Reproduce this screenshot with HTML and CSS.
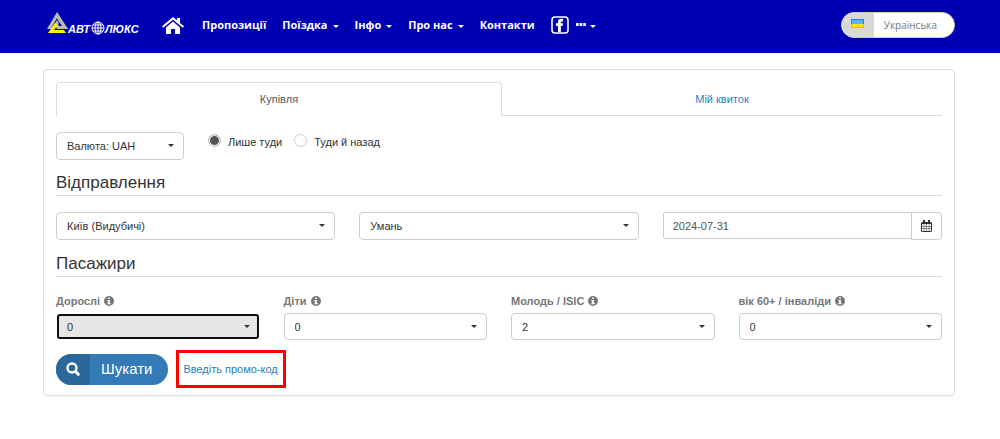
FILE: index.html
```html
<!DOCTYPE html>
<html lang="uk">
<head>
<meta charset="utf-8">
<meta name="viewport" content="width=device-width, initial-scale=1">
<title>Автолюкс</title>
<link rel="stylesheet" href="styles.css">
</head>
<body>
<svg class="sprite" aria-hidden="true">
  <symbol id="info" viewBox="0 0 16 16">
    <path fill="currentColor" fill-rule="evenodd" d="M8 0a8 8 0 1 0 0 16A8 8 0 0 0 8 0zM6.600 2.400h2.800v2.500H6.600zM5.300 6.200h4.100v5h1.300v2H5.300v-2h1.300v-3H5.300z"/>
  </symbol>
</svg>
<header class="topbar">
  <nav class="nav">
    <a class="logo" href="#" aria-label="Автолюкс">
      <svg width="94" height="26" viewBox="0 0 94 26">
        <path fill="#b9b9b9" d="M11 0L1 17h4L11 6l8 11h2z"/>
        <path fill="#b9b9b9" d="M11 0L22 17h-4L10 5z"/>
        <path fill="#b9b9b9" d="M11 8l-3 5 3 4h11l-2-3h-7l-1-2 1-1z"/>
        <path fill="#fff200" d="M9 11L2 21h18l-2-3H8l4-5z"/>
        <text class="logo-text" x="22" y="21">АВТ</text>
        <text class="logo-text" x="59" y="21">ЛЮКС</text>
        <g fill="none" stroke="#fff" stroke-width="1">
          <circle cx="52" cy="16" r="6"/><ellipse cx="52" cy="16" rx="3" ry="6"/>
          <path d="M46 16h12M52 10v12M47 13h10M47 19h10"/>
        </g>
      </svg>
    </a>
    <a class="home" href="#" aria-label="Головна">
      <svg width="22" height="18" viewBox="0 0 22 18">
        <path fill="#fff" d="M11 4.500L4 10.500V17h5v-5h4v5h5v-6.500z"/>
        <path fill="#fff" d="M11 0L0 9.300l1.300 1.500L11 2.800l9.700 8 1.300-1.500-4-3.400V1h-3v2.300z"/>
      </svg>
    </a>
    <a class="nav-link" href="#">Пропозиції</a>
    <a class="nav-link has-caret" href="#">Поїздка</a>
    <a class="nav-link has-caret" href="#">Інфо</a>
    <a class="nav-link has-caret" href="#">Про нас</a>
    <a class="nav-link" href="#">Контакти</a>
    <a class="facebook" href="#" aria-label="Facebook">
      <svg width="18" height="18" viewBox="0 0 18 18">
        <rect x="1" y="1" width="16" height="16" rx="3" fill="none" stroke="#fff" stroke-width="1.600"/>
        <path fill="#fff" d="M7 16V10H5V7.300h2V5.500C7 3.500 8.200 2.700 10 2.700h2V5.400h-1.200c-.7 0-.9.300-.9.900v1H12l-.4 2.700H9.900v6z"/>
      </svg>
    </a>
    <a class="nav-link has-caret more" href="#" aria-label="Ще">
      <svg width="10" height="3" viewBox="0 0 10 3"><path fill="#fff" d="M0 0h2.600v3H0zM3.600 0h2.600v3H3.600zM7.200 0h2.600v3H7.200z"/></svg>
    </a>
  </nav>
  <button class="language" type="button">
    <span class="language-flag">
      <svg width="13" height="9" viewBox="0 0 13 9"><path fill="#1787e0" d="M0 0h13v5H0z"/><path fill="#f3b60c" d="M0 5h13v4H0z"/><path fill="#55b5f5" d="M1 1h11v4H1z"/><path fill="#ffe11f" d="M1 5h11v3H1z"/></svg>
    </span>
    <span class="language-name">Українська</span>
  </button>
</header>

<main class="page">
  <form class="card">
    <div class="tabs">
      <a class="tab active" href="#">Купівля</a>
      <a class="tab" href="#">Мій квиток</a>
    </div>

    <div class="options">
      <div class="select currency"><select aria-label="Валюта"><option>Валюта: UAH</option></select></div>
      <div class="radios">
        <label><input type="radio" name="trip" checked>Лише туди</label>
        <label><input type="radio" name="trip">Туди й назад</label>
      </div>
    </div>

    <h2>Відправлення</h2>
    <div class="route">
      <div class="select"><select aria-label="Звідки"><option>Київ (Видубичі)</option></select></div>
      <div class="select"><select aria-label="Куди"><option>Умань</option></select></div>
      <div class="date">
        <input type="text" value="2024-07-31" aria-label="Дата">
        <button type="button" aria-label="Календар">
          <svg width="11" height="12" viewBox="0 0 11 12">
            <path fill="#333" fill-rule="evenodd" d="M1 2h1V0h2v2h3V0h2v2h1l1 1v8l-1 1H1l-1-1V3zM1 4V6h1.800V4zM3.300 4V6h2V4zM5.800 4V6h2V4zM8.300 4V6H10V4zM1 6.500v2h1.800v-2zM3.300 6.500v2h2v-2zM5.800 6.500v2h2v-2zM8.300 6.500v2H10v-2zM1 9v2h1.800V9zM3.300 9v2h2V9zM5.800 9v2h2V9zM8.300 9v2H10V9z"/>
          </svg>
        </button>
      </div>
    </div>

    <h2>Пасажири</h2>
    <div class="passengers">
      <div class="field">
        <label for="adults">Дорослі <svg class="info"><use href="#info"/></svg></label>
        <div class="select focused"><select id="adults"><option>0</option></select></div>
      </div>
      <div class="field">
        <label for="children">Діти <svg class="info"><use href="#info"/></svg></label>
        <div class="select"><select id="children"><option>0</option></select></div>
      </div>
      <div class="field">
        <label for="youth">Молодь / ISIC <svg class="info"><use href="#info"/></svg></label>
        <div class="select"><select id="youth"><option>2</option></select></div>
      </div>
      <div class="field">
        <label for="seniors">вік 60+ / інваліди <svg class="info"><use href="#info"/></svg></label>
        <div class="select"><select id="seniors"><option>0</option></select></div>
      </div>
    </div>

    <div class="actions">
      <button class="search" type="button">
        <span class="search-icon">
          <svg width="14" height="14" viewBox="0 0 14 14" fill="none" stroke="#fff"><circle cx="6" cy="6" r="4.500" stroke-width="2.400"/><path stroke-width="3" stroke-linecap="round" d="M9.500 9.500l2.800 2.800"/></svg>
        </span>
        <span class="search-label">Шукати</span>
      </button>
      <a class="promo" href="#">Введіть промо-код</a>
    </div>
  </form>
</main>
</body>
</html>
```
FILE: styles.css
```css
* { box-sizing: border-box; }

body {
  margin: 0;
  background: #fff;
  color: #333;
  font: 11px/16px "Liberation Sans", Arial, sans-serif;
}

a { color: #337ab7; text-decoration: none; }
button, input, select { font: inherit; color: inherit; }
svg { display: block; }
.sprite { position: absolute; width: 0; height: 0; }

/* Top bar */
.topbar {
  display: flex;
  align-items: center;
  justify-content: space-between;
  min-height: 53px;
  padding: 0 45px 4px 46px;
  background: #0000b3;
}
.nav { display: flex; align-items: center; gap: 16px; }
.logo { margin-right: 6px; }
.home { margin: 3px 2px 0 0; }
.logo-text {
  fill: #fff;
  font: italic bold 11px "Liberation Sans", Arial, sans-serif;
}
.nav-link {
  display: flex;
  align-items: center;
  color: #fff;
  font: bold 11px/16px "Open Sans", sans-serif;
}
.has-caret::after {
  content: "";
  margin: 3px 0 0 5px;
  border: 3px solid transparent;
  border-top-color: currentColor;
  border-bottom: 0;
}
.facebook { margin-right: -9px; }
.more::after { margin-left: 4px; }

.language {
  display: flex;
  height: 26px;
  padding: 0;
  overflow: hidden;
  border: 1px solid #ccc;
  border-radius: 13px;
  background: #fff;
  color: #777;
  font: 10px/16px "Open Sans", sans-serif;
}
.language-flag {
  display: flex;
  align-self: stretch;
  align-items: center;
  padding: 0 9px 2px;
  width: 32px;
  background: #d8d8d8;
}
.language-name { align-self: center; padding: 0 17px 0 10px; }

/* Card */
.page { padding: 16px 45px 43px 43px; }
.card {
  padding: 12px 12px 7px;
  border: 1px solid #ddd;
  border-radius: 4px;
  box-shadow: 0 1px 1px rgba(0, 0, 0, 0.05);
}

.tabs { display: flex; border-bottom: 1px solid #ddd; }
.tab {
  flex: 75;
  padding: 8px 0;
  border: 1px solid transparent;
  border-bottom: 0;
  text-align: center;
}
.tab.active {
  flex: 76;
  margin-bottom: -1px;
  border-color: #ddd;
  border-radius: 4px 4px 0 0;
  background: #fff;
  color: #555;
}

/* Controls */
.select { position: relative; }
.select select {
  display: block;
  width: 100%;
  height: 28px;
  padding: 0 24px 0 10px;
  border: 1px solid #ccc;
  border-radius: 4px;
  background: #fff;
  appearance: none;
}
.select::after {
  content: "";
  position: absolute;
  top: 12px;
  right: 10px;
  border: 3px solid transparent;
  border-top-color: #333;
  border-bottom: 0;
  pointer-events: none;
}
.passengers .select select { height: 27px; }
.select.focused select {
  border-color: transparent;
  background: #e6e6e6 padding-box;
  box-shadow: inset 0 0 0 2px #101010;
}

.options { display: flex; align-items: flex-start; gap: 24px; margin-top: 16px; }
.currency { width: 128px; }
.radios { display: flex; gap: 12px; }
.radios label { display: flex; align-items: center; gap: 7px; height: 20px; }
.radios input {
  width: 13px;
  height: 13px;
  margin: 0 0 3px;
  border: 1px solid #ccc;
  border-radius: 50%;
  background: #fff;
  appearance: none;
}
.radios input:checked { background: #555; box-shadow: inset 0 0 0 1px #fff; }

h2 {
  margin: 13px 0 16px;
  padding-bottom: 2px;
  border-bottom: 1px solid #ddd;
  font-size: 17px;
  font-weight: normal;
  line-height: 20px;
}

.route {
  display: grid;
  grid-template-columns: repeat(3, 1fr);
  gap: 24px;
  margin-bottom: 14px;
}
.date { display: flex; align-items: flex-start; }
.date input {
  flex: 1;
  min-width: 0;
  height: 27px;
  padding: 0 9px;
  border: 1px solid #ccc;
  border-radius: 2px 0 0 2px;
  color: #555;
}
.date button {
  display: flex;
  align-items: center;
  justify-content: center;
  width: 31px;
  height: 28px;
  margin-left: -1px;
  border: 1px solid #ccc;
  border-radius: 0 4px 4px 0;
  background: #fff;
}

.passengers { display: grid; grid-template-columns: repeat(4, 1fr); gap: 24px; }
.field label {
  display: flex;
  align-items: center;
  gap: 4px;
  margin-bottom: 4px;
  color: #777;
  font-weight: bold;
}
.info { width: 10px; height: 10px; }

.actions { display: flex; align-items: center; gap: 8px; margin-top: 10px; }
.search {
  display: flex;
  align-items: stretch;
  height: 31px;
  padding: 0;
  overflow: hidden;
  border: 0;
  border-radius: 16px;
  background: #337ab7;
  color: #fff;
  font-size: 15px;
}
.search-icon { display: flex; align-items: center; padding: 0 10px; background: #2b679a; }
.search-label { align-self: center; padding: 0 16px 0 11px; }
.promo { padding: 8px 5px 8px 4px; border: 3px solid #f00; }
```
